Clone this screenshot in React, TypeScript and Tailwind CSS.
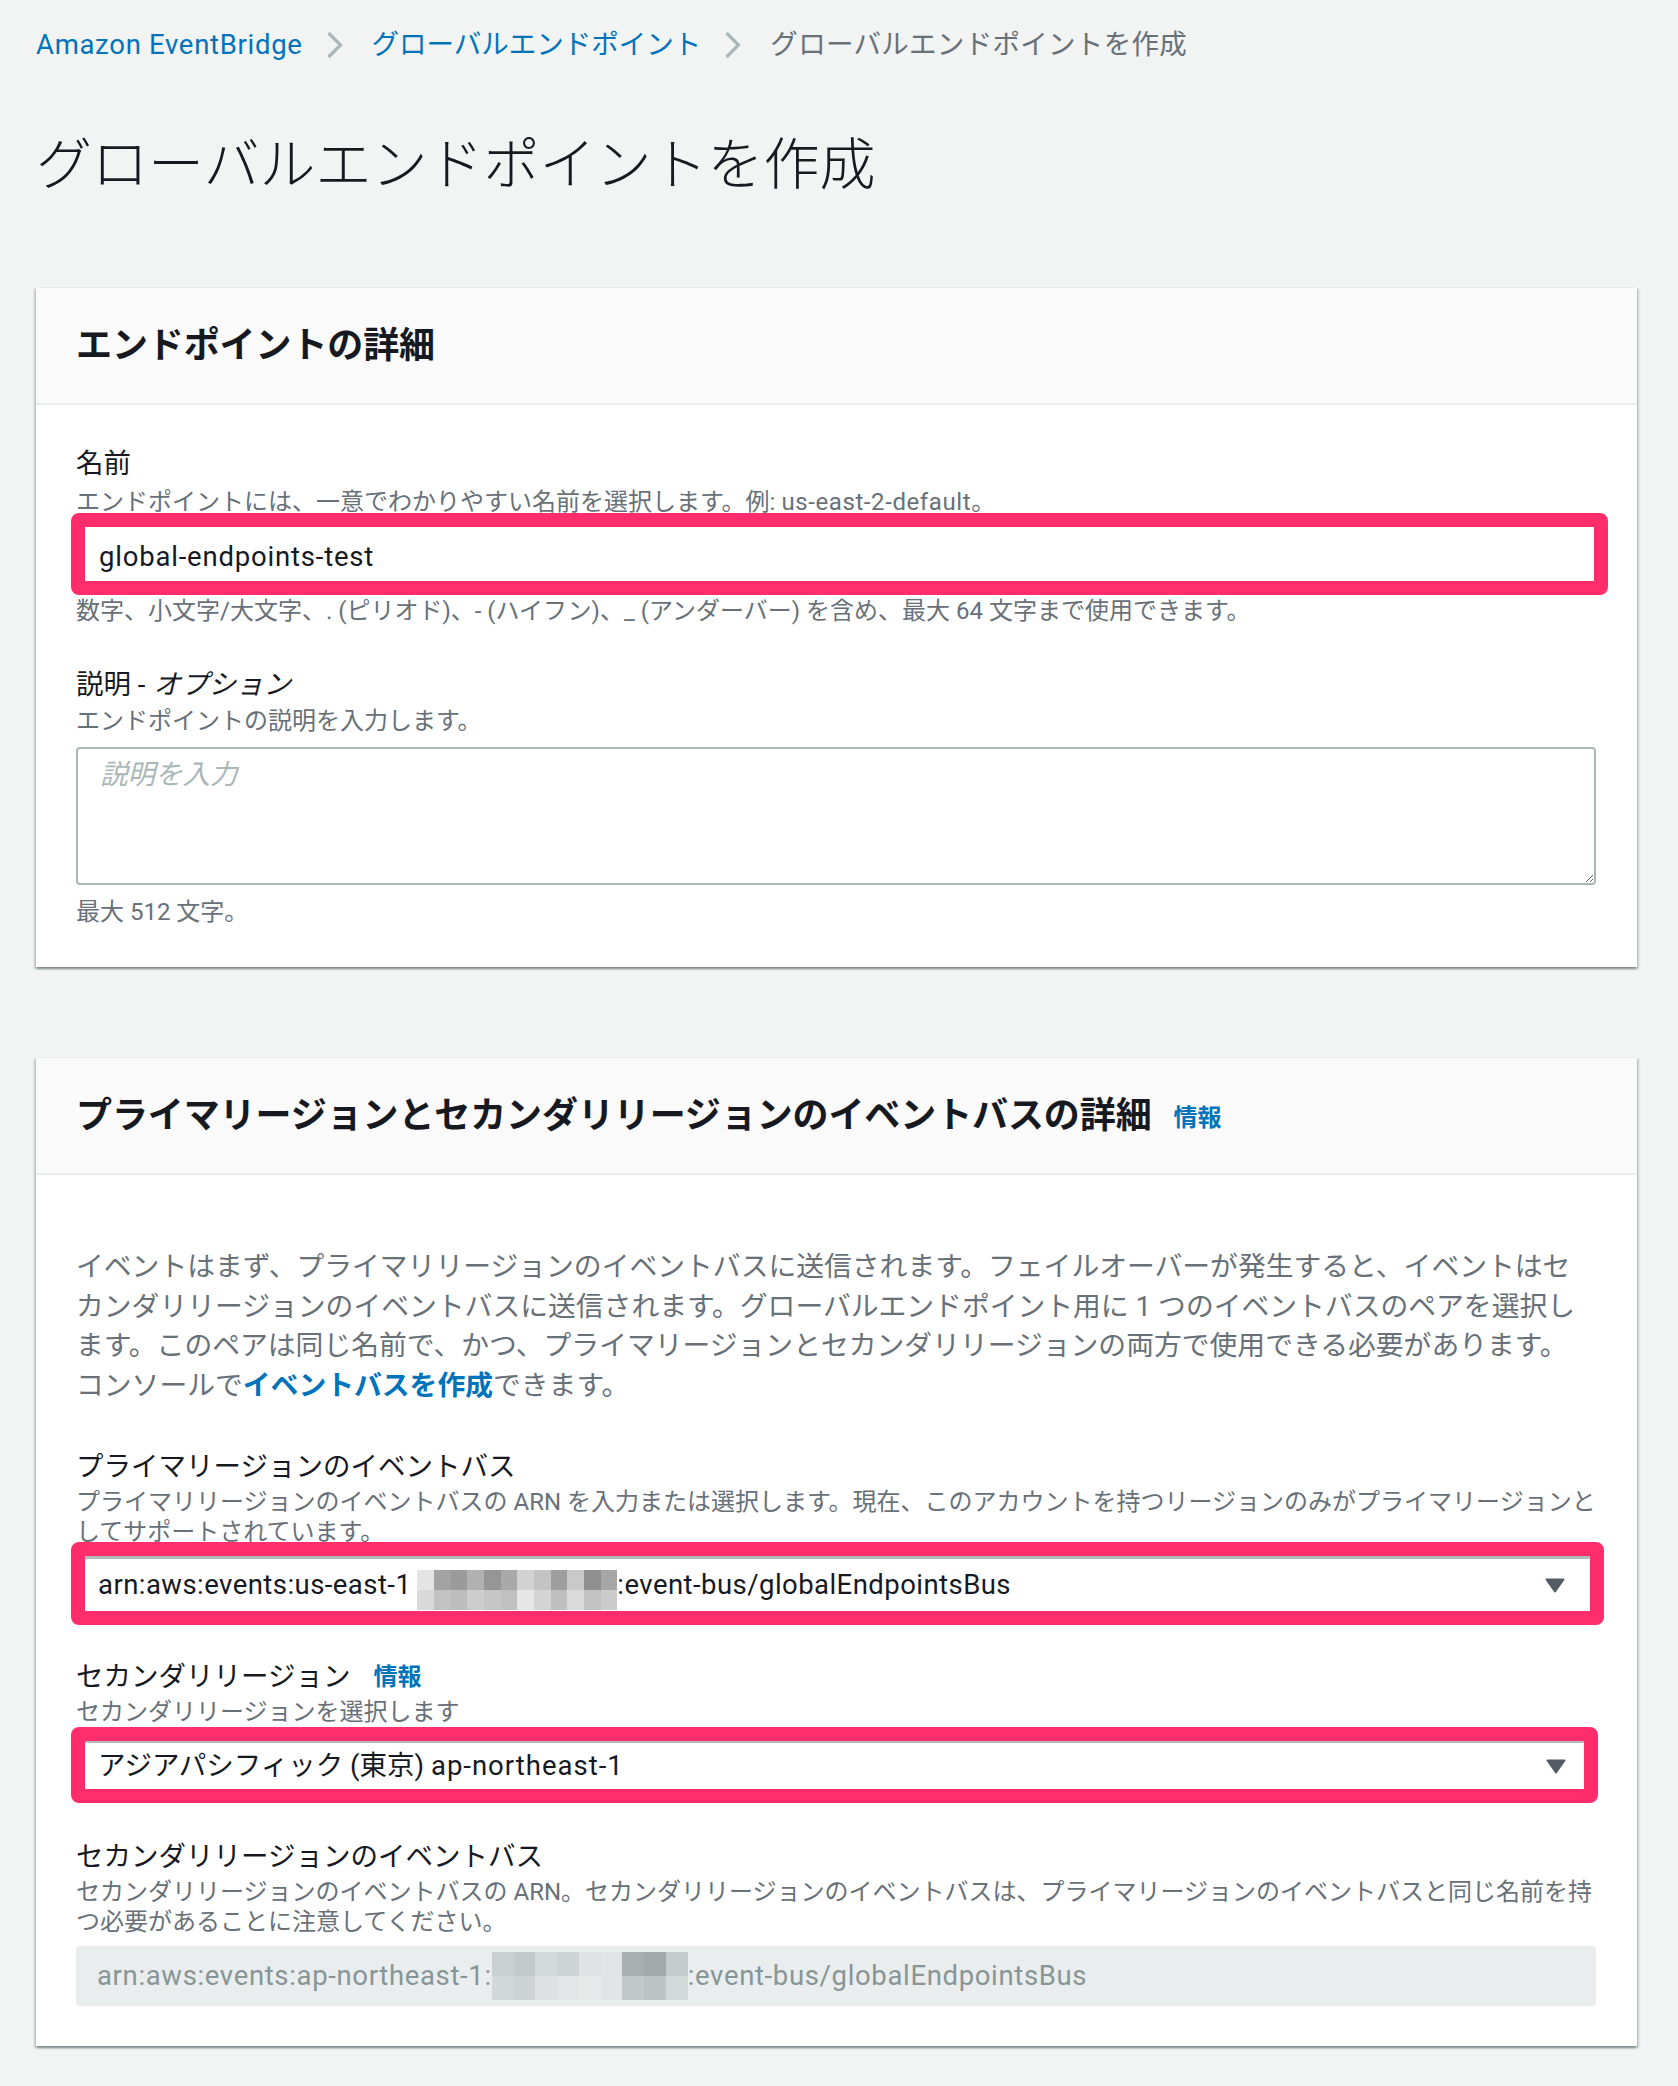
import React from 'react'

const mosaicTop = [
  ['#e4e4e4', '#a3a3a3', '#9b9b9b', '#b1b1b1', '#969696', '#a9a9a9', '#d2d2d2', '#c4c4c4', '#9e9e9e', '#c9c9c9', '#8f8f8f', '#a6a6a6'],
  ['#d9d9d9', '#c2c2c2', '#bdbdbd', '#cdcdcd', '#c6c6c6', '#c0c0c0', '#e6e6e6', '#d4d4d4', '#bfbfbf', '#dadada', '#c3c3c3', '#cbcbcb'],
]

const mosaicBottom = [
  ['#c9d0d0', '#c3caca', '#d4dada', '#cfd5d5', '#dfe3e3', '#e2e5e5', '#a9b0b0', '#a2aaaa', '#c6cccc'],
  ['#d2d8d8', '#cdd3d3', '#dde1e1', '#e3e6e6', '#e7e9e9', '#e0e4e4', '#c1c8c8', '#bcc3c3', '#d3d9d9'],
]

function Chevron() {
  return (
    <svg width="17" height="28" viewBox="0 0 17 28" className="ml-[23px] mr-[29px] shrink-0">
      <polyline points="2.5,2 14.5,14 2.5,26" fill="none" stroke="#aab7b8" strokeWidth="3.2" />
    </svg>
  )
}

function Caret() {
  return (
    <svg width="20" height="15" viewBox="0 0 20 15" className="shrink-0">
      <path d="M1.5 1.5h17l-8.5 12z" fill="#545b64" stroke="#545b64" strokeWidth="2" strokeLinejoin="round" />
    </svg>
  )
}

// pixelated block hiding the account id
function Mosaic({ rows, w, h }: { rows: string[][]; w: number; h: number }) {
  return (
    <span className="inline-flex flex-col shrink-0 blur-[0.6px]" style={{ width: w, height: h }}>
      {rows.map((row, i) => (
        <span key={i} className="flex flex-1">
          {row.map((c, j) => (
            <span key={j} className="flex-1" style={{ backgroundColor: c }} />
          ))}
        </span>
      ))}
    </span>
  )
}

function Card({ title, info, children }: { title: string; info?: boolean; children: React.ReactNode }) {
  return (
    <section className="w-[1601px] bg-white border-t border-[#eaeded] shadow-[0_2px_2px_0_rgba(0,28,36,0.3),2px_2px_2px_0_rgba(0,28,36,0.15),-2px_2px_2px_0_rgba(0,28,36,0.15)]">
      <div className="h-[117px] px-[40px] flex items-center bg-[#fafafa] border-b-2 border-[#eaeded]">
        <h2 className="text-[36px] leading-[48px] font-bold text-[#16191f] tracking-[-0.1px]">{title}</h2>
        {info && <a className="ml-[22px] mt-[4px] text-[24px] font-bold text-[#0073bb]">情報</a>}
      </div>
      <div className="px-[40px]">{children}</div>
    </section>
  )
}

function Label({ children }: { children: React.ReactNode }) {
  return <div className="text-[27.5px] leading-[40px] text-[#16191f] flex items-center">{children}</div>
}

function Desc({ children, className = '' }: { children: React.ReactNode; className?: string }) {
  return <div className={`text-[24px] text-[#687078] whitespace-nowrap ${className}`}>{children}</div>
}

export default function App() {
  return (
    <div className="min-h-[2086px] bg-[#f2f3f3] pl-[36px] pt-[25px] pb-[40px] font-['Roboto','Noto_Sans_CJK_JP',sans-serif]">
      {/* breadcrumbs */}
      <nav className="flex items-center h-[40px] text-[27.5px]">
        <a className="text-[#0073bb] tracking-[0.7px]">Amazon EventBridge</a>
        <Chevron />
        <a className="text-[#0073bb]">グローバルエンドポイント</a>
        <Chevron />
        <span className="text-[#687078] tracking-[0.3px]">グローバルエンドポイントを作成</span>
      </nav>

      <h1 className="mt-[64px] text-[56px] leading-[72px] font-light text-[#16191f]">グローバルエンドポイントを作成</h1>

      <div className="mt-[86px]">
        <Card title="エンドポイントの詳細">
          <div className="pt-[39px] pb-[39px]">
            <Label>名前</Label>
            <Desc className="mt-[2px] leading-[32px]">
              エンドポイントには、一意でわかりやすい名前を選択します。例: <span className="tracking-[0.6px]">us-east-2-default</span>。
            </Desc>
            <div className="mt-[-5px] ml-[-5px] w-[1537px] h-[82px] rounded-[8px] border-[14px] border-[#ff2d6b] bg-white flex items-center pl-[14px] pt-[5px]">
              <span className="text-[27.5px] text-[#16191f] tracking-[0.8px]">global-endpoints-test</span>
            </div>
            <Desc className="leading-[32px]">
              数字、小文字/大文字、. (ピリオド)、- (ハイフン)、_ (アンダーバー) を含め、最大 64 文字まで使用できます。
            </Desc>

            <div className="mt-[38px]">
              <Label>
                説明 - <span className="italic ml-[8px]">オプション</span>
              </Label>
            </div>
            <Desc className="leading-[32px]">エンドポイントの説明を入力します。</Desc>
            <textarea
              placeholder="説明を入力"
              className="mt-[10px] block w-[1520px] h-[138px] border-2 border-[#aab7b8] rounded-[4px] px-[22px] py-[6px] text-[27.5px] leading-[40px] text-[#16191f] placeholder:italic placeholder:text-[#aab7b8] outline-none"
            />
            <Desc className="mt-[11px] leading-[32px]">最大 512 文字。</Desc>
          </div>
        </Card>
      </div>

      <div className="mt-[90px]">
        <Card title="プライマリージョンとセカンダリリージョンのイベントバスの詳細" info>
          <div className="pt-[72px] pb-[40px]">
            <div className="text-[27.8px] leading-[39.5px] text-[#687078] whitespace-nowrap">
              <div>イベントはまず、プライマリリージョンのイベントバスに送信されます。フェイルオーバーが発生すると、イベントはセ</div>
              <div>カンダリリージョンのイベントバスに送信されます。グローバルエンドポイント用に 1 つのイベントバスのペアを選択し</div>
              <div>ます。このペアは同じ名前で、かつ、プライマリージョンとセカンダリリージョンの両方で使用できる必要があります。</div>
              <div>
                コンソールで<a className="font-bold text-[#0073bb]">イベントバスを作成</a>できます。
              </div>
            </div>

            <div className="mt-[42px]">
              <Label>プライマリージョンのイベントバス</Label>
            </div>
            <Desc className="leading-[30px]">
              <div>プライマリリージョンのイベントバスの ARN を入力または選択します。現在、このアカウントを持つリージョンのみがプライマリージョンと</div>
              <div>してサポートされています。</div>
            </Desc>
            <div className="mt-[-5px] ml-[-5px] w-[1533px] h-[83px] rounded-[8px] border-[14px] border-[#ff2d6b] bg-white flex">
              <div className="flex-1 flex items-center border-t-[3px] border-[#b3bcbd] pl-[13px] pr-[25px]">
                <span className="flex-1 flex items-center text-[27.5px] text-[#16191f] tracking-[0.45px]">
                  arn:aws:events:us-east-1
                  <span className="ml-[6px]">
                    <Mosaic rows={mosaicTop} w={200} h={40} />
                  </span>
                  :event-bus/globalEndpointsBus
                </span>
                <Caret />
              </div>
            </div>

            <div className="mt-[32px]">
              <Label>
                セカンダリリージョン
                <a className="ml-[23px] text-[24px] font-bold text-[#0073bb]">情報</a>
              </Label>
            </div>
            <Desc className="leading-[30px]">セカンダリリージョンを選択します</Desc>
            <div className="ml-[-5px] w-[1527px] h-[76px] rounded-[8px] border-[14px] border-[#ff2d6b] bg-white flex">
              <div className="flex-1 flex items-center border-t-[2px] border-[#b3bcbd] pl-[13px] pr-[18px]">
                <span className="flex-1 text-[27.5px] text-[#16191f]">
                  アジアパシフィック (東京) <span className="tracking-[1px]">ap-northeast-1</span>
                </span>
                <Caret />
              </div>
            </div>

            <div className="mt-[34px]">
              <Label>セカンダリリージョンのイベントバス</Label>
            </div>
            <Desc className="leading-[30px]">
              <div>セカンダリリージョンのイベントバスの ARN。セカンダリリージョンのイベントバスは、プライマリージョンのイベントバスと同じ名前を持</div>
              <div>つ必要があることに注意してください。</div>
            </Desc>
            <div className="mt-[9px] w-[1520px] h-[60px] rounded-[4px] bg-[#eaeded] flex items-center pl-[21px] text-[27.5px] text-[#879596] tracking-[0.65px]">
              arn:aws:events:ap-northeast-1:
              <Mosaic rows={mosaicBottom} w={196} h={48} />
              :event-bus/globalEndpointsBus
            </div>
          </div>
        </Card>
      </div>
    </div>
  )
}
